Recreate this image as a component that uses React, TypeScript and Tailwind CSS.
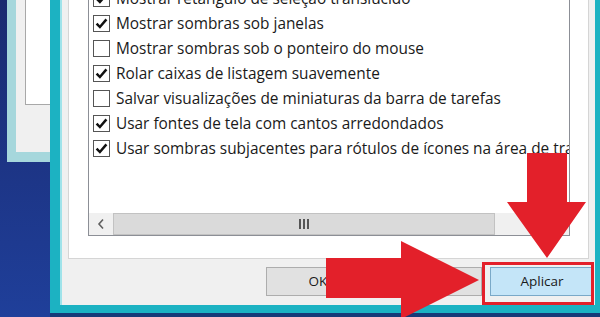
import React from 'react';

const rows = [
  { label: 'Mostrar retângulo de seleção translúcido', checked: true },
  { label: 'Mostrar sombras sob janelas', checked: true },
  { label: 'Mostrar sombras sob o ponteiro do mouse', checked: false },
  { label: 'Rolar caixas de listagem suavemente', checked: true },
  { label: 'Salvar visualizações de miniaturas da barra de tarefas', checked: false },
  { label: 'Usar fontes de tela com cantos arredondados', checked: true },
  { label: 'Usar sombras subjacentes para rótulos de ícones na área de trabalho', checked: true },
];

const CheckBox: React.FC<{ checked: boolean }> = ({ checked }) => (
  <div className="w-[17px] h-[17px] shrink-0 border border-[#555] bg-white flex items-center justify-center">
    {checked && (
      <svg width="15" height="15" viewBox="0 0 15 15">
        <path d="M2.6 7.6 L5.9 11 L12.4 3.4" fill="none" stroke="#111" strokeWidth="2.5" />
      </svg>
    )}
  </div>
);

const App: React.FC = () => {
  return (
    <div
      className="relative w-[600px] h-[317px] overflow-hidden bg-gradient-to-b from-[#1a2a70] to-[#1f3f9a] flex"
      style={{ fontFamily: '"Open Sans", "Noto Sans", sans-serif' }}
    >
      {/* background window peeking out on the left */}
      <div className="w-[50px] shrink-0 pl-[7px]">
        <div className="h-[162px] bg-[#a6d7dc] pl-[9px] pb-[10px]">
          <div className="h-full bg-[#f0f0f0] pl-[9px]">
            <div className="h-[105px] bg-white border-l border-b border-[#a8a8a8]" />
          </div>
        </div>
      </div>

      {/* main dialog */}
      <div className="flex-1 min-w-0 flex flex-col">
        <div className="h-[313px] shrink-0 flex border-l-[10px] border-b-[8px] border-[#1cb2c2] border-r-[5px]">
          <div className="w-[2px] shrink-0 bg-[#9fe3ea]" />
          <div className="flex-1 min-w-0 bg-[#f0f0f0] flex flex-col">
            {/* tab page */}
            <div className="ml-[6px] mr-[6px] h-[259px] shrink-0 bg-white border-l border-r border-b border-[#d5d5d5] pl-[19px] pr-[18px]">
              <div className="h-[236px] border-l border-r border-b border-[#8c8f96] flex flex-col justify-end overflow-hidden">
                <div className="flex flex-col shrink-0">
                  {rows.map((r) => (
                    <div key={r.label} className="h-[25px] shrink-0 flex items-center pl-[4px] gap-[6px] whitespace-nowrap">
                      <CheckBox checked={r.checked} />
                      <span className="text-[15.4px] text-[#1a1a1a]">{r.label}</span>
                    </div>
                  ))}
                </div>
                <div className="h-[52px] shrink-0" />
                {/* horizontal scrollbar */}
                <div className="h-[22px] shrink-0 flex bg-[#f0f0f0]">
                  <div className="w-[24px] shrink-0 flex items-center justify-center">
                    <svg width="8" height="12" viewBox="0 0 8 12">
                      <path d="M6 1.5 L2 6 L6 10.5" fill="none" stroke="#606060" strokeWidth="1.6" />
                    </svg>
                  </div>
                  <div className="w-[382px] shrink-0 bg-[#dadada] border border-[#c2c2c2] flex items-center justify-center">
                    <div className="flex gap-[2px]">
                      <div className="w-[2px] h-[10px] bg-[#555]" />
                      <div className="w-[2px] h-[10px] bg-[#555]" />
                      <div className="w-[2px] h-[10px] bg-[#555]" />
                    </div>
                  </div>
                  <div className="flex-1" />
                  <div className="w-[22px] shrink-0 flex items-center justify-center">
                    <svg width="8" height="12" viewBox="0 0 8 12">
                      <path d="M2 1.5 L6 6 L2 10.5" fill="none" stroke="#606060" strokeWidth="1.6" />
                    </svg>
                  </div>
                </div>
              </div>
            </div>
            {/* buttons */}
            <div className="flex justify-end gap-[8px] mt-[8px] pr-[1px] text-[13.5px] text-[#1a1a1a]">
              <div className="w-[104px] h-[29px] shrink-0 bg-[#e1e1e1] border border-[#adadad] flex items-center justify-center">OK</div>
              <div className="w-[104px] h-[29px] shrink-0 bg-[#e1e1e1] border border-[#adadad] flex items-center justify-center">Cancelar</div>
              <div className="w-[104px] h-[29px] shrink-0 bg-[#c4e5f8] border border-[#7aa9c8] flex items-center justify-center">Aplicar</div>
            </div>
          </div>
        </div>
        <div className="flex-1 bg-[#173a78]" />
      </div>

      {/* red annotation arrows */}
      <svg className="absolute left-0 top-0" width="600" height="317" viewBox="0 0 600 317">
        <rect x="483.5" y="263.5" width="109" height="40" fill="none" stroke="#e3202a" strokeWidth="3" />
        <polygon points="527,153 567,153 567,202 586,202 547,258 507,202 527,202" fill="#e3202a" />
        <polygon points="326,258 401,258 401,241 479,280 401,319 401,298 326,298" fill="#e3202a" />
      </svg>
    </div>
  );
};

export default App;
